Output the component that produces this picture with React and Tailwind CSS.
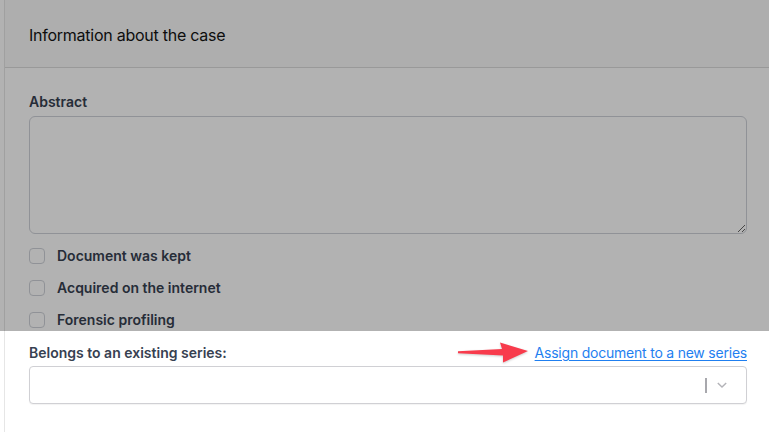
import React from "react";

export default function App() {
  return (
    <div className="relative w-[769px] h-[432px] overflow-hidden bg-white font-['Inter','Liberation_Sans',sans-serif]">
      <div className="ml-1 h-full border-l border-[#e6e6e6] bg-white">
        <div className="h-[68px] px-6 pt-[3px] flex items-center bg-[#f9fafa] border-b border-[#dcdcdc]">
          <span className="text-base text-[#141414] tracking-[-0.25px]">Information about the case</span>
        </div>
        <div className="px-6 pt-6 pr-[22px]">
          <div className="text-sm font-semibold text-[#374151] leading-5">Abstract</div>
          <textarea className="mt-1 block w-full h-[118px] rounded-md border border-[#ced1d8] bg-white resize-y" />
          <div className="mt-2.5 flex flex-col gap-2">
            {["Document was kept", "Acquired on the internet", "Forensic profiling"].map((t) => (
              <label key={t} className="flex items-center h-6 gap-3">
                <span className="w-4 h-4 rounded border border-[#cfd2d8] bg-white" />
                <span className="text-sm font-semibold text-[#374151]">{t}</span>
              </label>
            ))}
          </div>
          <div className="mt-[11px] flex items-center justify-between leading-5">
            <span className="text-sm font-semibold text-[#374151]">Belongs to an existing series:</span>
            <a href="#" className="text-sm text-[#1f7ff0] underline underline-offset-2 tracking-[-0.22px]">Assign document to a new series</a>
          </div>
          <div className="mt-[3px] h-[38px] rounded border border-[#d0d0d4] bg-white flex items-center justify-end shadow-[0_1px_1px_rgba(0,0,0,0.05)]">
            <span className="w-[2px] h-[15px] bg-[#a8a8ad] mr-2" />
            <svg width="14" height="14" viewBox="0 0 20 20" className="mr-[17px]" fill="none" stroke="#b3b3b8" strokeWidth="2">
              <path d="M4 7l6 6 6-6" />
            </svg>
          </div>
        </div>
      </div>
      <div className="absolute left-0 top-0 w-full h-[331px] bg-black/30" />
      <svg className="absolute left-0 top-0 w-full h-full pointer-events-none" viewBox="0 0 769 432" style={{ filter: "drop-shadow(0 1px 1px rgba(0,0,0,0.2))" }}>
        <polygon points="458,351.2 502,349 500,342.5 528,351 503,362.5 503,355.5 458,353.2" fill="#f83b4c" />
      </svg>
    </div>
  );
}
